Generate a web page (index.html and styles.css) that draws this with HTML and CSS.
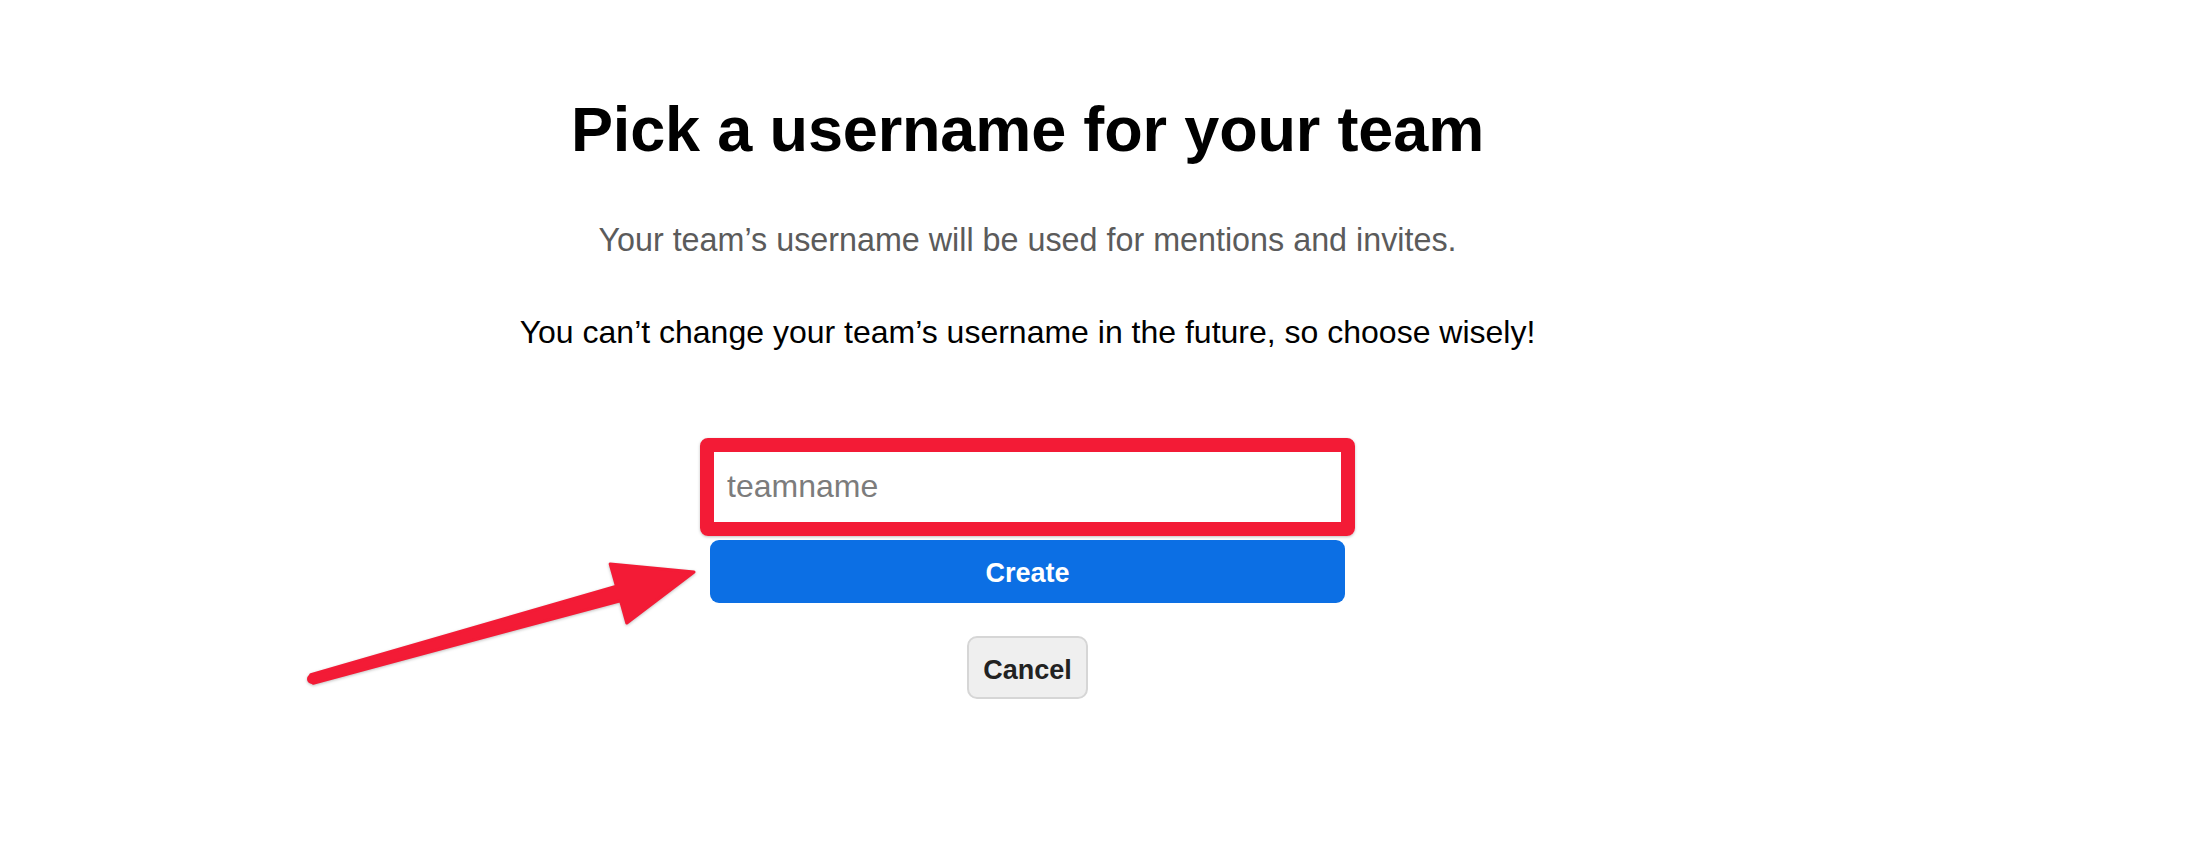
FILE: index.html
```html
<!DOCTYPE html>
<html lang="en">
<head>
<meta charset="utf-8">
<title>Pick a username for your team</title>
<link rel="stylesheet" href="styles.css">
</head>
<body>
<main class="page">
  <section class="content">
    <h1 class="title">Pick a username for your team</h1>
    <p class="lead">Your team’s username will be used for mentions and invites.</p>
    <p class="warning">You can’t change your team’s username in the future, so choose wisely!</p>
    <form class="form">
      <div class="field">
        <input class="input" type="text" placeholder="teamname">
        <span class="highlight"></span>
      </div>
      <button class="btn-create" type="button">Create</button>
      <button class="btn-cancel" type="button">Cancel</button>
    </form>
  </section>
</main>
<svg class="arrow" width="2196" height="866" viewBox="0 0 2196 866" aria-hidden="true">
  <g fill="#f31b36" stroke="#f31b36" stroke-width="3" stroke-linejoin="round">
    <polygon points="310.8,674.7 616.5,586.3 610.2,564 694,572 626.8,623 620.5,600.7 313.2,683.3"/>
    <circle cx="312" cy="679" r="3.5"/>
  </g>
</svg>
</body>
</html>
```

FILE: styles.css
```css
* { box-sizing: border-box; }

html, body {
  margin: 0;
  background: #ffffff;
}

body {
  font-family: "Liberation Sans", Arial, sans-serif;
  color: #000;
  position: relative;
  min-height: 866px;
}

.page {
  display: flex;
  justify-content: center;
  padding-top: 92px;
  padding-right: 141px;
}

.content {
  display: flex;
  flex-direction: column;
  align-items: center;
  text-align: center;
}

.title {
  margin: 0;
  font-size: 63px;
  font-weight: 700;
  line-height: 1.2;
  letter-spacing: -0.15px;
}

.lead {
  margin: 48px 0 0;
  font-size: 32.3px;
  line-height: 1.5;
  color: #5b5b5b;
}

.warning {
  margin: 44px 0 0;
  font-size: 32px;
  line-height: 1.5;
  color: #000;
}

.form {
  display: flex;
  flex-direction: column;
  align-items: center;
  margin-top: 91px;
}

.field {
  position: relative;
  width: 635px;
  height: 78px;
}

.input {
  width: 100%;
  height: 100%;
  border: 2px solid #cfcfcf;
  border-radius: 6px;
  padding: 0 15px;
  font-family: "Liberation Sans", Arial, sans-serif;
  font-size: 32px;
  color: #222;
  background: #fff;
  outline: none;
}

.input::placeholder {
  color: #7c7c7c;
}

.highlight {
  position: absolute;
  left: -10px;
  right: -10px;
  top: -9px;
  bottom: -11px;
  border: 14px solid #f31b36;
  border-radius: 8px;
  box-shadow: 0 1px 3px rgba(0, 0, 0, 0.25);
  pointer-events: none;
}

.btn-create {
  margin-top: 15px;
  width: 635px;
  height: 63px;
  border: none;
  border-radius: 9px;
  background: #0c6fe4;
  color: #fff;
  font-family: "Liberation Sans", Arial, sans-serif;
  font-size: 27px;
  font-weight: 700;
  padding: 4px 0 0;
  cursor: pointer;
}

.btn-cancel {
  margin-top: 33px;
  width: 121px;
  height: 63px;
  border: 2px solid #d6d6d6;
  border-radius: 10px;
  background: #efefef;
  color: #222;
  font-family: "Liberation Sans", Arial, sans-serif;
  font-size: 27px;
  font-weight: 700;
  padding: 5px 0 0;
  cursor: pointer;
}

.arrow {
  position: absolute;
  left: 0;
  top: 0;
  pointer-events: none;
  filter: drop-shadow(0 1px 1.5px rgba(0, 0, 0, 0.25));
}
```
